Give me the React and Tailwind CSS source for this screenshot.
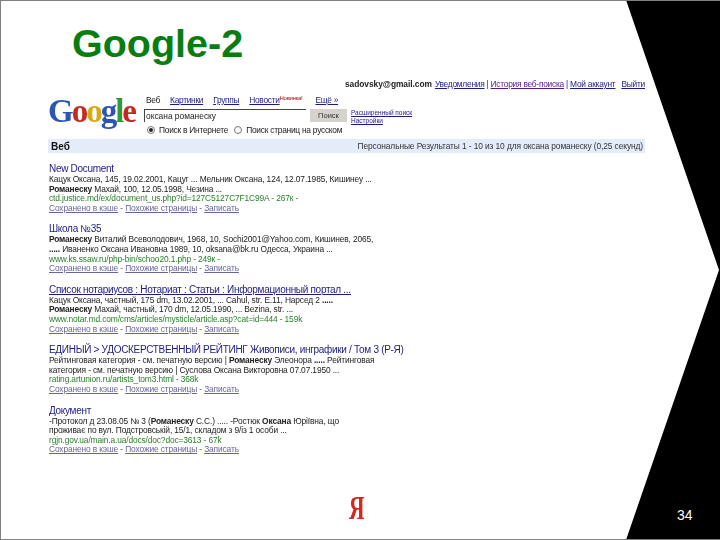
const results = [
  {
    title: "New Document",
    lines: [
      <>Кацук Оксана, 145, 19.02.2001, Кацуг ... Мельник Оксана, 124, 12.07.1985, Кишинеу ...</>,
      <><b>Романеску</b> Махай, 100, 12.05.1998, Чезина ...</>,
    ],
    url: "ctd.justice.md/ex/document_us.php?id=127C5127C7F1C99A - 267к -",
  },
  {
    title: "Школа №35",
    lines: [
      <><b>Романеску</b> Виталий Всеволодович, 1968, 10, Sochi2001@Yahoo.com, Кишинев, 2065,</>,
      <><b>.....</b> Иваненко Оксана Ивановна 1989, 10, oksana@bk.ru Одесса, Украина ...</>,
    ],
    url: "www.ks.ssaw.ru/php-bin/schoo20.1.php - 249к -",
  },
  {
    title: "Список нотариусов : Нотариат : Статьи : Информационный портал ...",
    underline: true,
    lines: [
      <>Кацук Оксана, частный, 175 dm, 13.02.2001, ... Cahul, str. E.11, Нарсед 2 <b>.....</b></>,
      <><b>Романеску</b> Махай, частный, 170 dm, 12.05.1990, ... Bezina, str. ...</>,
    ],
    url: "www.notar.md.com/cms/articles/mysticle/article.asp?cat=id=444 - 159k",
  },
  {
    title: "ЕДИНЫЙ > УДОСКЕРСТВЕННЫЙ РЕЙТИНГ Живописи, инграфики / Том 3 (Р-Я)",
    lines: [
      <>Рейтинговая категория - см. печатную версию | <b>Романеску</b> Элеонора <b>.....</b> Рейтинговая</>,
      <>категория - см. печатную версию | Суслова Оксана Викторовна 07.07.1950 ...</>,
    ],
    url: "rating.artunion.ru/artists_tom3.html - 368k",
  },
  {
    title: "Документ",
    lines: [
      <>-Протокол д 23.08.05 № 3 (<b>Романеску</b> С.С.) ..... -Ростюк <b>Оксана</b> Юріївна, що</>,
      <>проживає по вул. Подстровській, 15/1, складом з 9/із 1 особи ...</>,
    ],
    url: "rgjn.gov.ua/main.a.ua/docs/doc?doc=3613 - 67k",
  },
];

function Result({ item }) {
  return (
    <div className="mb-[9px]">
      <div className={`text-[10px] tracking-[-0.3px] leading-[13px] text-[#1c1c80] ${item.underline ? "underline" : ""}`}>
        {item.title}
      </div>
      {item.lines.map((line, i) => (
        <div key={i} className="text-[8.4px] tracking-[-0.13px] leading-[9.6px] text-[#222]">
          {line}
        </div>
      ))}
      <div className="text-[8.4px] tracking-[-0.13px] leading-[9.6px] text-[#2a7d2a]">{item.url}</div>
      <div className="text-[8.4px] tracking-[-0.13px] leading-[9.6px] text-[#555]">
        <span className="underline text-[#66669a]">Сохранено в кэше</span> -{" "}
        <span className="underline text-[#66669a]">Похожие страницы</span> -{" "}
        <span className="underline text-[#66669a]">Записать</span>
      </div>
    </div>
  );
}

function Radio({ checked }) {
  return (
    <span className="w-[8px] h-[8px] rounded-full border border-[#777] bg-white flex items-center justify-center">
      {checked && <span className="w-[4px] h-[4px] rounded-full bg-[#222]" />}
    </span>
  );
}

function GoogleLogo() {
  return (
    <div className="w-[96px] mt-[3px] font-['Liberation_Serif',serif] text-[33px] leading-[36px] tracking-[-2px] font-bold">
      <span className="text-[#2a55b5]">G</span>
      <span className="text-[#c8281e]">o</span>
      <span className="text-[#d9aa18]">o</span>
      <span className="text-[#2a55b5]">g</span>
      <span className="text-[#2f9a3a]">l</span>
      <span className="text-[#c8281e]">e</span>
    </div>
  );
}

export default function App() {
  return (
    <div className="relative w-[720px] h-[540px] overflow-hidden bg-white border-t border-l border-b border-[#808080] font-['Liberation_Sans',Arial,sans-serif]">
      <h1 className="ml-[71px] mt-[20px] h-[58px] text-[39.5px] leading-[44px] font-bold text-[#0a7d10]">Google-2</h1>

      <div className="ml-[47px] w-[597px] blur-[0.45px]">
        <div className="flex justify-end gap-[6px] text-[8.4px] leading-[10px] text-[#222]">
          <b className="tracking-[-0.05px] -mr-[3px]">sadovsky@gmail.com</b>
          <span className="tracking-[-0.25px] text-[#1c1c80]">
            <span className="underline">Уведомления</span> | <span className="underline text-[#551a8b]">История веб-поиска</span> | <span className="underline">Мой аккаунт</span>
          </span>
          <span className="tracking-[-0.25px] underline text-[#1c1c80]">Выйти</span>
        </div>

        <div className="flex mt-[1px]">
          <GoogleLogo />
          <div className="mt-[5px]">
            <div className="flex text-[8.4px] tracking-[-0.3px] leading-[10px] text-[#1c1c80] gap-[10px] mb-[4px]">
              <span className="text-[#222] ml-[2px]">Веб</span>
              <span className="underline">Картинки</span>
              <span className="underline">Группы</span>
              <span className="underline">Новости</span>
              <span className="text-[6px] leading-[7px] text-[#a01010] -ml-[10px] mr-[3px]">Новинка!</span>
              <span className="underline">Ещё »</span>
            </div>
            <div className="flex items-start">
              <div className="w-[162px] h-[13px] bg-white border-t border-l border-[#444] text-[8.4px] leading-[12px] text-[#222] pl-[1px]">
                оксана романеску
              </div>
              <div className="ml-[4px] w-[37px] h-[13px] bg-[#d6d3ce] text-[7.5px] leading-[13px] text-center text-[#333]">Поиск</div>
              <div className="ml-[4px] text-[6.5px] leading-[8px] text-[#1c1c80]">
                <div className="underline">Расширенный поиск</div>
                <div className="underline">Настройки</div>
              </div>
            </div>
            <div className="flex items-center text-[8.4px] tracking-[-0.25px] leading-[10px] text-[#222] ml-[3px]">
              <Radio checked />
              <span className="ml-[4px]">Поиск в Интернете</span>
              <span className="ml-[6px]"><Radio /></span>
              <span className="ml-[4px]">Поиск страниц на русском</span>
            </div>
          </div>
        </div>

        <div className="flex items-center justify-between h-[14px] mt-[4px] mb-[9px] bg-[#e5ecf9] pl-[3px] pr-[2px]">
          <b className="text-[10px] text-[#111]">Веб</b>
          <span className="text-[8.4px] tracking-[-0.1px] text-[#333]">Персональные Результаты 1 - 10 из 10 для оксана романеску (0,25 секунд)</span>
        </div>

        <div className="pl-[1px]">
          {results.map((item, i) => (
            <Result key={i} item={item} />
          ))}
        </div>
      </div>

      {/* Yandex mark */}
      <div className="absolute left-[348px] top-[490px] origin-left scale-x-[0.65] font-['Liberation_Serif',serif] text-[33px] leading-[34px] font-bold text-[#d8261c]">Я</div>

      {/* black slide corner */}
      <svg className="absolute left-[-1px] top-[-1px]" width="720" height="540" viewBox="0 0 720 540">
        <polygon points="626,0 720,0 720,540 626,540 719,270" fill="#000" />
      </svg>
      <div className="absolute left-[676px] top-[506px] text-[14px] leading-[16px] text-white">34</div>
    </div>
  );
}
